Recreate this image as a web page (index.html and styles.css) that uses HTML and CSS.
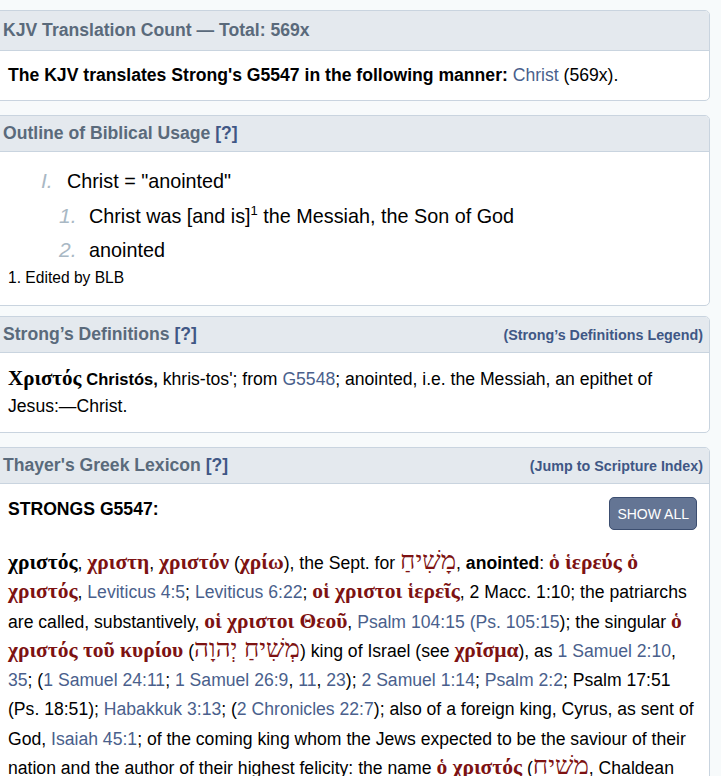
FILE: index.html
```html
<!DOCTYPE html>
<html lang="en">
<head>
  <meta charset="UTF-8">
  <title>G5547 - christos - Lexicon</title>
  <link rel="stylesheet" href="styles.css">
</head>
<body>
  <div class="lexicon">

    <div class="panel">
      <div class="panel-head">
        <span class="panel-title">KJV Translation Count &mdash; Total: 569x</span>
      </div>
      <div class="panel-body kjv-count">
        <b>The KJV translates Strong's G5547 in the following manner:</b> <a href="#">Christ</a> (569x).
      </div>
    </div>

    <div class="panel panel-outline">
      <div class="panel-head">
        <span class="panel-title">Outline of Biblical Usage <a class="help" href="#">[?]</a></span>
      </div>
      <div class="panel-body outline">
        <ol class="outline-roman">
          <li>
            Christ = "anointed"
            <ol class="outline-num">
              <li>Christ was [and is]<sup>1</sup> the Messiah, the Son of God</li>
              <li>anointed</li>
            </ol>
          </li>
        </ol>
        <div class="footnote">1. Edited by BLB</div>
      </div>
    </div>

    <div class="panel">
      <div class="panel-head">
        <span class="panel-title">Strong’s Definitions <a class="help" href="#">[?]</a></span>
        <a class="head-link" href="#">(Strong’s Definitions Legend)</a>
      </div>
      <div class="panel-body strongs">
        <span class="lemma">Χριστός</span> <b class="translit">Christós,</b> khris-tos'; from <a href="#">G5548</a>; anointed, i.e. the Messiah, an epithet of Jesus:—Christ.
      </div>
    </div>

    <div class="panel">
      <div class="panel-head">
        <span class="panel-title">Thayer's Greek Lexicon <a class="help" href="#">[?]</a></span>
        <a class="head-link" href="#">(Jump to Scripture Index)</a>
      </div>
      <div class="panel-body thayer">
        <div class="thayer-top">
          <b class="strongs-no">STRONGS G5547:</b>
          <button class="btn-show">SHOW ALL</button>
        </div>
        <p class="thayer-text">
          <span class="gk gk-head">χριστός</span>, <span class="gk">χριστη</span>, <span class="gk">χριστόν</span> (<span class="gk">χρίω</span>), the Sept. for <span class="hb">מָשִׁיחַ</span>, <b>anointed</b>: <span class="gk">ὁ ἱερεύς ὁ χριστός</span>, <a href="#">Leviticus 4:5</a>; <a href="#">Leviticus 6:22</a>; <span class="gk">οἱ χριστοι ἱερεῖς</span>, 2 Macc. 1:10; the patriarchs are called, substantively, <span class="gk">οἱ χριστοι Θεοῦ</span>, <a href="#">Psalm 104:15</a> <a href="#">(Ps. 105:15</a>); the singular <span class="gk">ὁ χριστός τοῦ κυρίου</span> (<span class="hb">מְשִׁיחַ יְהוָה</span>) king of Israel (see <span class="gk">χρῖσμα</span>), as <a href="#">1 Samuel 2:10</a>, <a href="#">35</a>; (<a href="#">1 Samuel 24:11</a>; <a href="#">1 Samuel 26:9</a>, <a href="#">11</a>, <a href="#">23</a>); <a href="#">2 Samuel 1:14</a>; <a href="#">Psalm 2:2</a>; Psalm 17:51 (Ps. 18:51); <a href="#">Habakkuk 3:13</a>; (<a href="#">2 Chronicles 22:7</a>); also of a foreign king, Cyrus, as sent of God, <a href="#">Isaiah 45:1</a>; of the coming king whom the Jews expected to be the saviour of their nation and the author of their highest felicity: the name <span class="gk">ὁ χριστός</span> (<span class="hb">מָשִׁיח</span>, Chaldean <span class="hb">מְשִׁיחָא</span>, see <span class="gk">Μεσσίας</span>) is not found in the O. T. but is first used in the Book of Enoch.
        </p>
      </div>
    </div>

  </div>
</body>
</html>
```

FILE: styles.css
```css
* {
  box-sizing: border-box;
}

body {
  margin: 0;
  background: #f7fafb;
  font-family: "Liberation Sans", Arial, sans-serif;
  font-size: 17.6px;
  color: #000;
  overflow: hidden;
}

a {
  color: #4a5f8c;
  text-decoration: none;
}

.lexicon {
  margin-left: -7px;
  width: 717px;
  padding-top: 10px;
}

.panel {
  background: #fff;
  border: 1px solid #c9d4df;
  border-radius: 5px;
  margin-bottom: 14px;
  overflow: hidden;
}

.panel-outline {
  margin-bottom: 10px;
}

.panel-head {
  display: flex;
  align-items: center;
  justify-content: space-between;
  background: #e4e9ee;
  border-bottom: 1px solid #c9d4df;
  height: 36px;
  padding: 0 6px 0 9px;
}

.panel:first-child .panel-head {
  height: 40px;
}

.panel-title {
  font-size: 17.6px;
  font-weight: bold;
  color: #5a6a7b;
}

.help {
  color: #3f5785;
}

.head-link {
  font-size: 14.3px;
  font-weight: bold;
  color: #3f5785;
}

.panel-body {
  padding: 0 12px 0 14px;
}

/* kjv count */
.kjv-count {
  padding-top: 14px;
  padding-bottom: 15px;
  line-height: 20px;
}

/* outline */
.outline {
  padding-top: 15px;
  padding-bottom: 17px;
}

.outline ol {
  margin: 0;
  padding: 0;
  list-style: none;
}

.outline-roman {
  padding-left: 59px !important;
  font-size: 19.8px;
}

.outline-roman > li {
  position: relative;
  line-height: 28px;
}

.outline-roman > li::before {
  content: "I.";
  position: absolute;
  left: -26px;
  font-size: 21px;
  font-style: italic;
  color: #a9b8c4;
}

.outline-num {
  counter-reset: num;
  padding-left: 22px !important;
  margin-top: 4px !important;
}

.outline-num > li {
  counter-increment: num;
  position: relative;
  line-height: 34px;
}

.outline-num > li::before {
  content: counter(num) ".";
  position: absolute;
  left: -30px;
  font-size: 21px;
  font-style: italic;
  color: #a9b8c4;
}

.outline sup {
  font-size: 13px;
  line-height: 0;
}

.footnote {
  font-size: 15.6px;
  line-height: 20px;
  margin-top: 1px;
}

/* strong's definition */
.strongs {
  line-height: 27px;
  padding-top: 12px;
  padding-bottom: 12px;
}

.lemma {
  font-family: "Liberation Serif", "DejaVu Serif", serif;
  font-size: 21px;
  font-weight: bold;
}

.translit {
  font-size: 16.5px;
}

/* thayer */
.thayer-top {
  display: flex;
  justify-content: space-between;
  align-items: flex-start;
  padding-top: 13px;
}

.strongs-no {
  line-height: 20px;
  margin-top: 2px;
}

.btn-show {
  background: #647594;
  color: #fff;
  border: 1px solid #3c4e70;
  border-radius: 5px;
  font-family: "Liberation Sans", Arial, sans-serif;
  font-size: 14px;
  height: 33px;
  padding: 0 7px;
}

.thayer-text {
  line-height: 29.3px;
  margin: 19px 0 0;
}

.gk {
  font-family: "Liberation Serif", "DejaVu Serif", serif;
  font-size: 21.5px;
  line-height: 1;
  font-weight: bold;
  color: #7d1212;
}

.gk-head {
  color: #000;
}

.hb {
  font-family: "Liberation Serif", "DejaVu Serif", serif;
  font-size: 26px;
  line-height: 0;
  color: #7d1212;
}
```
